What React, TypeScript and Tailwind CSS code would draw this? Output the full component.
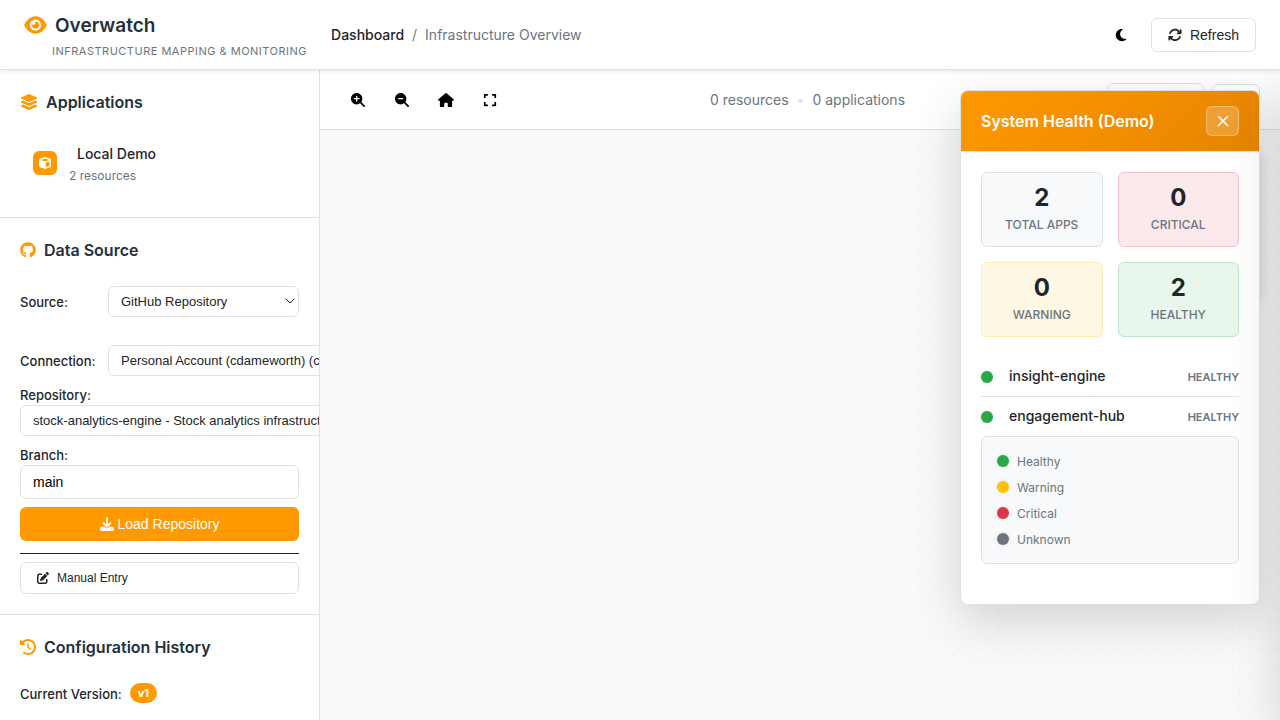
import React from "react";
import {
  FaEye,
  FaLayerGroup,
  FaCube,
  FaGithub,
  FaDownload,
  FaPenToSquare,
  FaClockRotateLeft,
  FaMagnifyingGlassPlus,
  FaMagnifyingGlassMinus,
  FaHouse,
  FaExpand,
  FaMoon,
  FaArrowsRotate,
  FaGear,
} from "react-icons/fa6";
import { ChevronDown, X } from "lucide-react";

const fieldClass =
  "rounded-md border border-[#dee2e6] bg-white px-3 text-[#212529] font-['Liberation_Sans',sans-serif]";

function SectionTitle({ icon, children }: { icon: React.ReactNode; children: React.ReactNode }) {
  return (
    <h2 className="flex items-center gap-2 text-base leading-6 font-semibold text-[#232f3e]">
      <span className="text-[#ff9900]">{icon}</span>
      {children}
    </h2>
  );
}

function SelectField({ id, value, className }: { id: string; value: string; className: string }) {
  return (
    <div className={`relative ${className}`}>
      <select id={id} className={`${fieldClass} h-[31px] w-full appearance-none text-[13px]`}>
        <option>{value}</option>
      </select>
      <ChevronDown className="pointer-events-none absolute top-[7px] right-px size-4 text-[#212529]" strokeWidth={1.5} />
    </div>
  );
}

function Header() {
  return (
    <header className="relative z-20 flex h-[70px] shrink-0 items-center border-b border-[#dee2e6] bg-white px-6 shadow-[0_2px_4px_rgba(0,0,0,0.08)]">
      <div className="flex flex-col">
        <h1 className="flex h-7 items-center gap-2 text-[19px] leading-7 font-semibold text-[#232f3e]">
          <FaEye className="h-5 w-[23px] text-[#ff9900]" />
          <span className="pt-[3px]">Overwatch</span>
        </h1>
        <p className="mt-1 ml-7 text-[11px] leading-4 tracking-[0.5px] text-[#6c757d] uppercase">
          Infrastructure Mapping &amp; Monitoring
        </p>
      </div>
      <nav aria-label="Breadcrumb" className="ml-6 flex flex-1 items-center gap-2 text-sm text-[#6c757d]">
        <a href="#dashboard" className="font-medium text-[#212529]">Dashboard</a>
        <span>/</span>
        <span>Infrastructure Overview</span>
      </nav>
      <div className="flex items-center gap-3">
        <button type="button" aria-label="Toggle theme" className="grid size-9 place-items-center text-black">
          <FaMoon className="size-[14px]" />
        </button>
        <button
          type="button"
          className="flex h-[34px] items-center gap-2 rounded-md border border-[#dee2e6] bg-white px-4 font-['Liberation_Sans',sans-serif] text-sm font-medium text-[#212529]"
        >
          <FaArrowsRotate className="size-[14px]" />
          Refresh
        </button>
      </div>
    </header>
  );
}

function Sidebar() {
  return (
    <aside className="w-80 shrink-0 overflow-hidden border-r border-[#dee2e6] bg-white">
      <section className="border-b border-[#dee2e6] p-5">
        <SectionTitle icon={<FaLayerGroup className="h-4 w-[18px]" />}>Applications</SectionTitle>
        <div className="mt-4 mb-px flex h-[66px] items-center gap-3 px-[13px]">
          <span className="grid size-6 place-items-center rounded-md bg-[#ff9900] text-white">
            <FaCube className="size-3" />
          </span>
          <div className="pt-1">
            <div className="ml-2 text-sm leading-[22px] font-medium text-[#212529]">Local Demo</div>
            <div className="text-xs leading-[22px] text-[#6c757d]">2 resources</div>
          </div>
        </div>
      </section>

      <section className="border-b border-[#dee2e6] p-5 text-[13px] text-[#212529]">
        <SectionTitle icon={<FaGithub className="size-4" />}>Data Source</SectionTitle>
        <div className="mt-6 flex items-center">
          <label htmlFor="source" className="w-[88px] shrink-0 pt-[3px] font-medium">Source:</label>
          <SelectField id="source" value="GitHub Repository" className="min-w-0 flex-1" />
        </div>
        <div className="mt-7 flex items-center">
          <label htmlFor="connection" className="w-[88px] shrink-0 pt-[3px] font-medium">Connection:</label>
          <SelectField id="connection" value="Personal Account (cdameworth) (cdameworth)" className="w-80 shrink-0" />
        </div>
        <div className="mt-2 flex flex-col items-start">
          <label htmlFor="repository" className="pt-0.5 leading-[19px] font-medium">Repository:</label>
          <SelectField
            id="repository"
            value="stock-analytics-engine - Stock analytics infrastructure"
            className="w-[400px]"
          />
        </div>
        <div className="mt-2 flex flex-col">
          <label htmlFor="branch" className="pt-0.5 leading-[19px] font-medium">Branch:</label>
          <input id="branch" defaultValue="main" className={`${fieldClass} h-[34px] text-sm text-black`} />
        </div>
        <button
          type="button"
          className="mt-2 flex h-[34px] w-full items-center justify-center gap-1 rounded-md bg-[#ff9900] font-['Liberation_Sans',sans-serif] text-sm text-white"
        >
          <FaDownload className="size-[14px]" />
          Load Repository
        </button>
        <hr className="mt-3 border-[#212529]" />
        <button type="button" className={`${fieldClass} mt-2 flex h-8 w-full items-center gap-2 px-4 text-xs`}>
          <FaPenToSquare className="size-3" />
          Manual Entry
        </button>
      </section>

      <section className="p-5">
        <SectionTitle icon={<FaClockRotateLeft className="size-4" />}>Configuration History</SectionTitle>
        <div className="mt-6 flex items-center gap-2 text-[13px] text-[#212529]">
          <span className="pt-0.5 leading-[18px] font-medium">Current Version:</span>
          <span className="rounded-full bg-[#ff9900] px-2 text-[11px] leading-5 font-bold text-white">v1</span>
        </div>
      </section>
    </aside>
  );
}

const tools = [
  { label: "Zoom in", Icon: FaMagnifyingGlassPlus },
  { label: "Zoom out", Icon: FaMagnifyingGlassMinus },
  { label: "Reset view", Icon: FaHouse },
  { label: "Fit to screen", Icon: FaExpand },
];

function Toolbar() {
  return (
    <div className="flex h-[60px] shrink-0 items-center justify-between border-b border-[#dee2e6] bg-white px-5">
      <div className="flex gap-2">
        {tools.map(({ label, Icon }) => (
          <button key={label} type="button" aria-label={label} className="grid size-9 place-items-center text-black">
            <Icon className="h-[14px] w-4" />
          </button>
        ))}
      </div>
      <div className="flex items-center gap-2 text-sm text-[#6c757d]">
        <span>0 resources</span>
        <span className="text-[#dee2e6]">•</span>
        <span>0 applications</span>
      </div>
      <div className="flex items-center gap-2">
        <button type="button" aria-label="Layout" className={`${fieldClass} grid h-[34px] w-[97px] place-items-center`}>
          <FaLayerGroup />
        </button>
        <button type="button" aria-label="Settings" className={`${fieldClass} grid h-8 w-12 place-items-center`}>
          <FaGear />
        </button>
      </div>
    </div>
  );
}

function Canvas() {
  return (
    <div className="min-h-0 flex-1 bg-[#f8f9fb]">
      <svg className="size-full" aria-hidden="true">
        <defs>
          <pattern id="dots" width="20" height="20" patternUnits="userSpaceOnUse">
            <rect x="9" y="9" width="1" height="1" fill="#dee2e6" />
            <rect x="19" y="19" width="1" height="1" fill="#dee2e6" />
          </pattern>
        </defs>
        <rect width="100%" height="100%" fill="url(#dots)" />
      </svg>
    </div>
  );
}

const stats = [
  { value: 2, label: "Total Apps", style: "border-[#dee2e6] bg-[#f8f9fb]" },
  { value: 0, label: "Critical", style: "border-[#f5c2c7] bg-[#fbe9eb]" },
  { value: 0, label: "Warning", style: "border-[#ffecb5] bg-[#fff8e5]" },
  { value: 2, label: "Healthy", style: "border-[#bee5c8] bg-[#e9f6ec]" },
];

const legend = [
  { label: "Healthy", dot: "bg-[#28a745]" },
  { label: "Warning", dot: "bg-[#ffc107]" },
  { label: "Critical", dot: "bg-[#dc3545]" },
  { label: "Unknown", dot: "bg-[#6c757d]" },
];

function HealthPanel() {
  return (
    <section
      aria-label="System Health"
      className="absolute top-5 right-5 w-[300px] overflow-hidden rounded-lg border border-[#dee2e6] bg-white shadow-[0_16px_48px_rgba(0,0,0,0.16)]"
    >
      <div className="flex h-[61px] items-center justify-between border-b border-[#dee2e6] bg-linear-135 from-[#ff9900] to-[#e68400] px-5">
        <h2 className="text-base font-semibold text-white">System Health (Demo)</h2>
        <button
          type="button"
          aria-label="Close"
          className="grid h-[30px] w-[33px] place-items-center rounded-md border border-white/30 bg-white/20 text-white"
        >
          <X className="size-[18px]" strokeWidth={2} />
        </button>
      </div>
      <div className="p-5">
        <div className="grid grid-cols-2 gap-[15px]">
          {stats.map((s) => (
            <div key={s.label} className={`flex h-[75px] flex-col items-center rounded-md border pt-[9px] ${s.style}`}>
              <div className="text-2xl leading-8 font-bold text-[#212529]">{s.value}</div>
              <div className="text-xs leading-[22px] font-medium text-[#6c757d] uppercase">{s.label}</div>
            </div>
          ))}
        </div>
        <ul className="mt-5 divide-y divide-[#dee2e6]">
          {["insight-engine", "engagement-hub"].map((name) => (
            <li key={name} className="flex h-10 items-center">
              <span className="size-3 rounded-full bg-[#28a745] shadow-[0_0_4px_rgba(0,0,0,0.1)]" />
              <span className="ml-4 flex-1 pb-0.5 text-sm font-medium text-[#212529]">{name}</span>
              <span className="pt-px text-[11px] font-semibold text-[#6c757d]">HEALTHY</span>
            </li>
          ))}
        </ul>
        <ul className="-mt-px mb-5 flex flex-col gap-2 rounded-md border border-[#dee2e6] bg-[#f8f9fb] p-[15px]">
          {legend.map((l) => (
            <li key={l.label} className="flex h-[18px] items-center gap-2 text-xs leading-4 text-[#6c757d]">
              <span className={`size-3 rounded-full shadow-[0_0_4px_rgba(0,0,0,0.1)] ${l.dot}`} />
              <span className="pt-0.5">{l.label}</span>
            </li>
          ))}
        </ul>
      </div>
    </section>
  );
}

export default function App() {
  return (
    <div className="flex h-screen flex-col overflow-hidden bg-white font-[Inter,sans-serif]">
      <Header />
      <div className="flex min-h-0 flex-1">
        <Sidebar />
        <main className="relative flex min-w-0 flex-1 flex-col overflow-hidden">
          <Toolbar />
          <Canvas />
          <div className="absolute top-20 right-5 h-[150px] w-[200px] rounded-md bg-white shadow-[0_4px_12px_rgba(0,0,0,0.15)]" />
          <HealthPanel />
          <div className="pointer-events-none absolute inset-y-0 left-full w-96 shadow-[0_16px_48px_rgba(0,0,0,0.16)]" />
        </main>
      </div>
    </div>
  );
}
